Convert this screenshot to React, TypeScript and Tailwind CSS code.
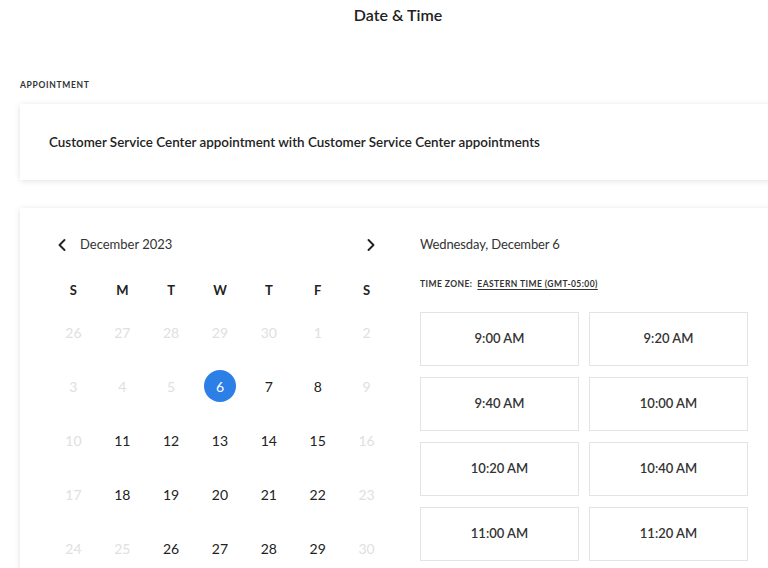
import { ChevronLeft, ChevronRight } from "lucide-react";

const weekdays = ["S", "M", "T", "W", "T", "F", "S"];

type Day = { n: number; active: boolean };

const weeks: Day[][] = [
    [26, 27, 28, 29, 30, 1, 2].map((n) => ({ n, active: false })),
    [3, 4, 5, 6, 7, 8, 9].map((n, i) => ({ n, active: i >= 3 && i <= 5 })),
    [10, 11, 12, 13, 14, 15, 16].map((n, i) => ({ n, active: i >= 1 && i <= 5 })),
    [17, 18, 19, 20, 21, 22, 23].map((n, i) => ({ n, active: i >= 1 && i <= 5 })),
    [24, 25, 26, 27, 28, 29, 30].map((n, i) => ({ n, active: i >= 2 && i <= 5 })),
];

const slots = ["9:00 AM", "9:20 AM", "9:40 AM", "10:00 AM", "10:20 AM", "10:40 AM", "11:00 AM", "11:20 AM"];

export default function App() {
    return (
        <div className="w-[768px] h-[568px] overflow-hidden bg-white text-[#222] font-['Lato','Liberation_Sans',sans-serif]">
            <h1 className="h-[30px] pt-[6px] pl-[28px] text-center text-[16px] leading-[18px] font-semibold text-[#222]">
                Date &amp; Time
            </h1>

            <p className="mt-[49px] ml-5 text-[8.5px] leading-[12px] font-bold tracking-[0.08em] text-[#333] uppercase">
                Appointment
            </p>

            <div className="mt-[13px] ml-5 w-[800px] h-[76px] flex items-center px-[29px] bg-white shadow-[0_1px_6px_rgba(0,0,0,0.12)]">
                <p className="text-[13.4px] font-semibold text-[#222]">
                    Customer Service Center appointment with Customer Service Center appointments
                </p>
            </div>

            <div className="mt-[28px] ml-5 w-[800px] h-[420px] flex gap-[29px] px-[29px] pt-6 bg-white shadow-[0_1px_6px_rgba(0,0,0,0.12)]">
                <div className="w-[342px]">
                    <div className="h-[26px] flex items-center justify-between">
                        <div className="flex items-center gap-[8px] pl-[3px]">
                            <ChevronLeft className="w-[20px] h-[20px] text-[#222]" strokeWidth={2.3} />
                            <span className="text-[13px] text-[#333]">December 2023</span>
                        </div>
                        <ChevronRight className="w-[20px] h-[20px] text-[#222] mr-[10px]" strokeWidth={2.3} />
                    </div>

                    <div className="mt-[19px] grid grid-cols-7 h-[28px] items-center">
                        {weekdays.map((d, i) => (
                            <div key={i} className="text-center text-[13px] font-bold text-[#222]">{d}</div>
                        ))}
                    </div>

                    {weeks.map((week, wi) => (
                        <div key={wi} className="grid grid-cols-7 h-[54px] items-center">
                            {week.map((day) => (
                                <div key={day.n} className="flex justify-center">
                                    {day.n === 6 && day.active ? (
                                        <span className="w-[32px] h-[32px] rounded-full bg-[#2d7fe8] text-white text-[14px] flex items-center justify-center">
                                            6
                                        </span>
                                    ) : (
                                        <span className={`text-[14px] ${day.active ? "text-[#222]" : "text-[#e0e0e0]"}`}>
                                            {day.n}
                                        </span>
                                    )}
                                </div>
                            ))}
                        </div>
                    ))}
                </div>

                <div className="w-[328px]">
                    <p className="h-[26px] flex items-center text-[13px] tracking-[-0.01em] text-[#333]">Wednesday, December 6</p>
                    <p className="mt-[20px] text-[8.5px] leading-[12px] font-bold tracking-[0.05em] text-[#333] uppercase">
                        Time Zone:&nbsp;{" "}
                        <span className="underline underline-offset-2">Eastern Time (GMT-05:00)</span>
                    </p>
                    <div className="mt-[22px] grid grid-cols-2 gap-x-[10px] gap-y-[11px]">
                        {slots.map((s) => (
                            <button
                                key={s}
                                className="h-[54px] border border-[#e3e3e3] bg-white text-[13px] font-semibold text-[#333]"
                            >
                                {s}
                            </button>
                        ))}
                    </div>
                </div>
            </div>
        </div>
    );
}
